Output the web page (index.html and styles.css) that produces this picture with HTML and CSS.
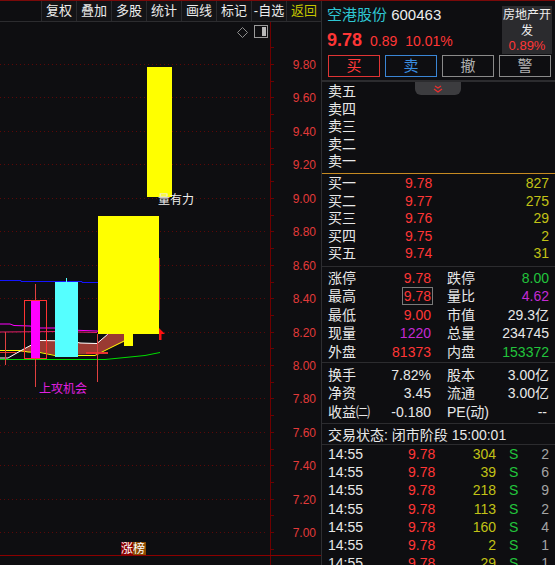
FILE: index.html
```html
<!DOCTYPE html>
<html lang="zh">
<head>
<meta charset="utf-8">
<title>空港股份 600463</title>
<link rel="stylesheet" href="styles.css">
</head>
<body>
<div class="app">
  <div class="left">
    <div class="toolbar">
      <span class="tb">复权</span><span class="tb">叠加</span><span class="tb">多股</span><span class="tb">统计</span><span class="tb">画线</span><span class="tb">标记</span><span class="tb">-自选</span><span class="tb back">返回</span>
    </div>
    <div class="chart">
      <svg class="plot" width="321" height="543" viewBox="0 22 321 543" xmlns="http://www.w3.org/2000/svg">
        <g class="grid" stroke="#5c0808" stroke-width="1" stroke-dasharray="1 3">
          <line x1="0" x2="268" y1="64.5" y2="64.5"/>
          <line x1="0" x2="268" y1="97.5" y2="97.5"/>
          <line x1="0" x2="268" y1="131.5" y2="131.5"/>
          <line x1="0" x2="268" y1="164.5" y2="164.5"/>
          <line x1="0" x2="268" y1="198.5" y2="198.5"/>
          <line x1="0" x2="268" y1="231.5" y2="231.5"/>
          <line x1="0" x2="268" y1="265.5" y2="265.5"/>
          <line x1="0" x2="268" y1="298.5" y2="298.5"/>
          <line x1="0" x2="268" y1="332.5" y2="332.5"/>
          <line x1="0" x2="268" y1="365.5" y2="365.5"/>
          <line x1="0" x2="268" y1="398.5" y2="398.5"/>
          <line x1="0" x2="268" y1="432.5" y2="432.5"/>
          <line x1="0" x2="268" y1="465.5" y2="465.5"/>
          <line x1="0" x2="268" y1="499.5" y2="499.5"/>
          <line x1="0" x2="268" y1="532.5" y2="532.5"/>
        </g>
        <line x1="270.5" x2="270.5" y1="22" y2="565" stroke="#6e0000"/>
        <g stroke="#6e0000">
          <line x1="270" x2="274" y1="47.5" y2="47.5"/>
          <line x1="270" x2="274" y1="64.5" y2="64.5"/>
          <line x1="270" x2="274" y1="81.5" y2="81.5"/>
          <line x1="270" x2="274" y1="97.5" y2="97.5"/>
          <line x1="270" x2="274" y1="114.5" y2="114.5"/>
          <line x1="270" x2="274" y1="131.5" y2="131.5"/>
          <line x1="270" x2="274" y1="148.5" y2="148.5"/>
          <line x1="270" x2="274" y1="164.5" y2="164.5"/>
          <line x1="270" x2="274" y1="181.5" y2="181.5"/>
          <line x1="270" x2="274" y1="198.5" y2="198.5"/>
          <line x1="270" x2="274" y1="215.5" y2="215.5"/>
          <line x1="270" x2="274" y1="231.5" y2="231.5"/>
          <line x1="270" x2="274" y1="248.5" y2="248.5"/>
          <line x1="270" x2="274" y1="265.5" y2="265.5"/>
          <line x1="270" x2="274" y1="282.5" y2="282.5"/>
          <line x1="270" x2="274" y1="298.5" y2="298.5"/>
          <line x1="270" x2="274" y1="315.5" y2="315.5"/>
          <line x1="270" x2="274" y1="332.5" y2="332.5"/>
          <line x1="270" x2="274" y1="348.5" y2="348.5"/>
          <line x1="270" x2="274" y1="365.5" y2="365.5"/>
          <line x1="270" x2="274" y1="382.5" y2="382.5"/>
          <line x1="270" x2="274" y1="398.5" y2="398.5"/>
          <line x1="270" x2="274" y1="415.5" y2="415.5"/>
          <line x1="270" x2="274" y1="432.5" y2="432.5"/>
          <line x1="270" x2="274" y1="449.5" y2="449.5"/>
          <line x1="270" x2="274" y1="465.5" y2="465.5"/>
          <line x1="270" x2="274" y1="482.5" y2="482.5"/>
          <line x1="270" x2="274" y1="499.5" y2="499.5"/>
          <line x1="270" x2="274" y1="515.5" y2="515.5"/>
          <line x1="270" x2="274" y1="532.5" y2="532.5"/>
          <line x1="270" x2="274" y1="549.5" y2="549.5"/>
        </g>
        <g class="axis-label" text-anchor="end">
          <text x="316" y="69">9.80</text>
          <text x="316" y="102">9.60</text>
          <text x="316" y="136">9.40</text>
          <text x="316" y="169">9.20</text>
          <text x="316" y="203">9.00</text>
          <text x="316" y="236">8.80</text>
          <text x="316" y="270">8.60</text>
          <text x="316" y="303">8.40</text>
          <text x="316" y="337">8.20</text>
          <text x="316" y="370">8.00</text>
          <text x="316" y="403">7.80</text>
          <text x="316" y="437">7.60</text>
          <text x="316" y="470">7.40</text>
          <text x="316" y="504">7.20</text>
          <text x="316" y="537">7.00</text>
        </g>
        <line x1="0" x2="321" y1="555.5" y2="555.5" stroke="#8b0000"/>

        <!-- tool icons -->
        <path d="M242.5 27.5 L247.5 32.5 L242.5 37.5 L237.5 32.5 Z" fill="none" stroke="#8c8c8c"/>
        <rect x="254.5" y="25.5" width="13" height="12" fill="none" stroke="#9a9a9a"/>
        <rect x="262" y="27" width="4" height="9" fill="#b8b8b8"/>

        <!-- indicator lines -->
        <polyline points="0,280.5 21,280.5 21,281.5 82,281.5 82,282.5 98,282.5" fill="none" stroke="#1414ff"/>
        <polygon points="8,357 22,350 40,340 72,341 82,343 97,343 108,334 124,334 124,342 97,354 55,355 40,352 20,352" fill="#9a3a32"/>
        <polyline points="0,350.5 20,350.5 28,352 40,352.5 55,355.5 95,355.5 124,341" fill="none" stroke="#ffff00"/>
        <polyline points="0,358 8,358 22,350 40,340.5 72,341 80,343 97,343.5 108,334" fill="none" stroke="#ffffff"/>
        <polyline points="0,359.5 105,359.5 115,358.5 125,357.5 135,356.5 145,355.5 155,353.5 160,352.5" fill="none" stroke="#00dd00"/>
        <polyline points="0,332 60,331.5 97,332.5" fill="none" stroke="#e0206a"/>
        <polyline points="0,324 10,324 14,325.5 30,326 40,328 60,328 70,330 97,331 108,334" fill="none" stroke="#ff00ff"/>
        <line x1="86" x2="108" y1="353" y2="353" stroke="#e83030" stroke-width="2"/>
        <line x1="0" x2="16" y1="352.5" y2="352.5" stroke="#e83030"/>

        <!-- candles -->
        <line x1="5.5" x2="5.5" y1="332" y2="365" stroke="#e04040"/>
        <line x1="35.5" x2="35.5" y1="284" y2="387" stroke="#e04040"/>
        <rect x="31" y="300" width="9" height="59" fill="#ff00ff"/>
        <rect x="24.5" y="300.5" width="22" height="58" fill="none" stroke="#ff3333"/>
        <line x1="66.5" x2="66.5" y1="278" y2="282" stroke="#55ffff"/>
        <rect x="55" y="282" width="23" height="75" fill="#55ffff"/>
        <line x1="97.5" x2="97.5" y1="334" y2="382" stroke="#e04040"/>
        <rect x="98" y="216" width="61" height="118" fill="#ffff00"/>
        <rect x="124" y="334" width="9" height="12" fill="#ffff00"/>
        <line x1="159.5" x2="159.5" y1="258" y2="310" stroke="#c03030"/>
        <polygon points="159,340 159,328 165,334 161.5,334 161.5,340" fill="#ff1010"/>
        <rect x="147" y="67" width="25" height="130" fill="#ffff00"/>

        <text class="note" x="158" y="204">量有力</text>
        <text class="signal" x="39" y="393">上攻机会</text>

        <rect x="121" y="542" width="12" height="13" fill="#8b0000"/>
        <rect x="133" y="542" width="13" height="13" fill="#8b4a00"/>
        <text class="tag" x="121" y="553">涨</text>
        <text class="tag" x="133" y="553">榜</text>
      </svg>
    </div>
  </div>

  <div class="right">
    <div class="hdr">
      <div class="hdr-main">
        <div class="name"><span class="cyan">空港股份</span> <span class="code">600463</span></div>
        <div class="quote"><b class="red">9.78</b><span class="red">0.89</span><span class="red">10.01%</span></div>
      </div>
      <div class="sector"><span class="sl">房地产开</span><span class="sl">发</span><span class="sl red">0.89%</span></div>
    </div>
    <div class="btns">
      <span class="btn buy">买</span><span class="btn sell">卖</span><span class="btn gray">撤</span><span class="btn gray">警</span>
    </div>
    <div class="book-wrap">
      <div class="tab"><svg width="10" height="8" viewBox="0 0 10 8"><path d="M2 1 L5 3 L8 1 M1 4 L5 7 L9 4" fill="none" stroke="#e83030" stroke-width="1.3"/></svg></div>
      <div class="book sellbook">
        <div class="row"><span>卖五</span></div>
        <div class="row"><span>卖四</span></div>
        <div class="row"><span>卖三</span></div>
        <div class="row"><span>卖二</span></div>
        <div class="row"><span>卖一</span></div>
      </div>
      <div class="book buybook">
        <div class="row"><span>买一</span><span class="red">9.78</span><span class="vol">827</span></div>
        <div class="row"><span>买二</span><span class="red">9.77</span><span class="vol">275</span></div>
        <div class="row"><span>买三</span><span class="red">9.76</span><span class="vol">29</span></div>
        <div class="row"><span>买四</span><span class="red">9.75</span><span class="vol">2</span></div>
        <div class="row"><span>买五</span><span class="red">9.74</span><span class="vol">31</span></div>
      </div>
    </div>
    <div class="stats s1">
      <div class="srow"><div class="pair"><span>涨停</span><span class="red">9.78</span></div><div class="pair"><span>跌停</span><span class="green">8.00</span></div></div>
      <div class="srow"><div class="pair"><span>最高</span><span class="red boxed">9.78</span></div><div class="pair"><span>量比</span><span class="purple">4.62</span></div></div>
      <div class="srow"><div class="pair"><span>最低</span><span class="red">9.00</span></div><div class="pair"><span>市值</span><span>29.3亿</span></div></div>
      <div class="srow"><div class="pair"><span>现量</span><span class="purple">1220</span></div><div class="pair"><span>总量</span><span>234745</span></div></div>
      <div class="srow"><div class="pair"><span>外盘</span><span class="red">81373</span></div><div class="pair"><span>内盘</span><span class="green">153372</span></div></div>
    </div>
    <div class="stats s2">
      <div class="srow"><div class="pair"><span>换手</span><span>7.82%</span></div><div class="pair"><span>股本</span><span>3.00亿</span></div></div>
      <div class="srow"><div class="pair"><span>净资</span><span>3.45</span></div><div class="pair"><span>流通</span><span>3.00亿</span></div></div>
      <div class="srow"><div class="pair"><span>收益㈡</span><span>-0.180</span></div><div class="pair"><span>PE(动)</span><span class="dash">--</span></div></div>
    </div>
    <div class="status">交易状态: 闭市阶段 15:00:01</div>
    <div class="trades">
      <div class="trow"><span>14:55</span><span class="red">9.78</span><span class="vol r">304</span><span class="green s">S</span><span class="cnt">2</span></div>
      <div class="trow"><span>14:55</span><span class="red">9.78</span><span class="vol r">39</span><span class="green s">S</span><span class="cnt">6</span></div>
      <div class="trow"><span>14:55</span><span class="red">9.78</span><span class="vol r">218</span><span class="green s">S</span><span class="cnt">9</span></div>
      <div class="trow"><span>14:55</span><span class="red">9.78</span><span class="vol r">113</span><span class="green s">S</span><span class="cnt">2</span></div>
      <div class="trow"><span>14:55</span><span class="red">9.78</span><span class="vol r">160</span><span class="green s">S</span><span class="cnt">4</span></div>
      <div class="trow"><span>14:55</span><span class="red">9.78</span><span class="vol r">2</span><span class="green s">S</span><span class="cnt">1</span></div>
      <div class="trow"><span>14:55</span><span class="red">9.78</span><span class="vol r">29</span><span class="green s">S</span><span class="cnt">1</span></div>
    </div>
  </div>
</div>
</body>
</html>
```

FILE: styles.css
```css
* { box-sizing: border-box; }
html, body { margin: 0; padding: 0; }
body {
  width: 555px;
  height: 565px;
  overflow: hidden;
  background: #0e0e11;
  color: #e8e8e8;
  font-family: "Liberation Sans", "Noto Sans CJK SC", sans-serif;
  font-size: 14px;
}
.app {
  display: flex;
  height: 565px;
  border-top: 1px solid #7a0a0a;
}
.left {
  width: 321px;
  display: flex;
  flex-direction: column;
}
.toolbar {
  height: 21px;
  display: flex;
  justify-content: flex-end;
  border-bottom: 1px solid #2c2c2f;
}
.tb {
  width: 35px;
  height: 20px;
  line-height: 20px;
  text-align: center;
  font-size: 13px;
  color: #ececec;
  background: #131316;
  border-left: 1px solid #2a2a2d;
}
.tb.back { color: #c4c400; }
.chart { flex: 1; overflow: hidden; }
.plot { display: block; }
.axis-label text {
  font-family: "Liberation Sans", sans-serif;
  font-size: 12px;
  fill: #e23a3a;
}
.note { font-family: "Noto Sans CJK SC", sans-serif; font-size: 12px; fill: #eeeeee; }
.signal { font-family: "Noto Sans CJK SC", sans-serif; font-size: 12px; fill: #e020e0; }
.tag { font-family: "Noto Sans CJK SC", sans-serif; font-size: 12px; fill: #ffffff; }

.right {
  flex: 1;
  border-left: 1px solid #2e2e31;
  display: flex;
  flex-direction: column;
  overflow: hidden;
}
.red { color: #ff3636; }
.green { color: #22c43c; }
.purple { color: #c42ad4; }
.cyan { color: #2ec6d2; }
.vol { color: #c2c216; }

.hdr {
  height: 57px;
  display: flex;
  justify-content: space-between;
  padding: 4px 3px 0 5px;
}
.name { font-size: 15px; line-height: 20px; }
.code { color: #ececec; }
.quote {
  margin-top: 4px;
  line-height: 22px;
  display: flex;
  align-items: baseline;
  gap: 8px;
}
.quote b { font-size: 18px; font-weight: bold; }
.quote span { font-size: 14px; }
.sector {
  width: 50px;
  height: 48px;
  margin-top: 1px;
  background: #2b2b2e;
  display: flex;
  flex-direction: column;
  align-items: center;
  color: #eeeeee;
  font-family: "Noto Sans CJK SC", sans-serif;
  font-size: 12px;
}
.sl { height: 16px; line-height: 16px; white-space: nowrap; }
.sector .red { font-family: "Liberation Sans", sans-serif; font-size: 13px; }

.btns {
  margin-top: 1px;
  padding-left: 6px;
  display: flex;
  gap: 5px;
}
.btn {
  width: 52px;
  height: 22px;
  line-height: 20px;
  text-align: center;
  font-size: 15px;
  border: 1px solid #8a8a8a;
  color: #b0b0b0;
}
.btn.buy { border-color: #e03434; color: #ff3a3a; }
.btn.sell { border-color: #3a86d6; color: #3a8ee0; }

.book-wrap {
  position: relative;
  margin-top: 3px;
  border-top: 2px solid #2c2c2f;
}
.tab {
  position: absolute;
  left: 93px;
  top: 0;
  width: 46px;
  height: 13px;
  background: #3c3c3f;
  border-radius: 0 0 6px 6px;
  display: flex;
  justify-content: center;
  align-items: center;
}
.tab svg { display: block; }
.book { padding-left: 6px; padding-right: 6px; }
.sellbook { padding-top: 1px; padding-bottom: 2px; border-bottom: 1px solid #c68a22; }
.buybook { padding-top: 1px; padding-bottom: 3px; border-bottom: 1px solid #2c2c2f; }
.row {
  height: 17.6px;
  line-height: 17.6px;
  display: grid;
  grid-template-columns: 77px 60px 1fr;
}
.row .vol { text-align: right; }

.stats { padding: 2px 6px 1px 6px; border-bottom: 1px solid #2c2c2f; }
.stats.s2 { padding-top: 3px; padding-bottom: 2px; }
.srow {
  height: 18.4px;
  line-height: 18.4px;
  display: grid;
  grid-template-columns: 103px 102px;
  column-gap: 16px;
}
.pair { display: flex; justify-content: space-between; }
.boxed {
  border: 1px solid #7a7a7a;
  line-height: 16px;
  height: 18px;
  padding: 0 1px;
  margin-right: -2px;
}
.dash { padding-right: 2px; }

.status {
  height: 21px;
  padding: 2px 6px 0;
  line-height: 19px;
  border-bottom: 1px solid #2c2c2f;
}
.trades { padding: 0 6px; }
.trow {
  height: 18.2px;
  line-height: 18.2px;
  display: grid;
  grid-template-columns: 80px 50px 38px 33px 20px;
}
.trow .r { text-align: right; }
.trow .s { padding-left: 13px; }
.trow .cnt { text-align: right; color: #a4a4a4; }
```
